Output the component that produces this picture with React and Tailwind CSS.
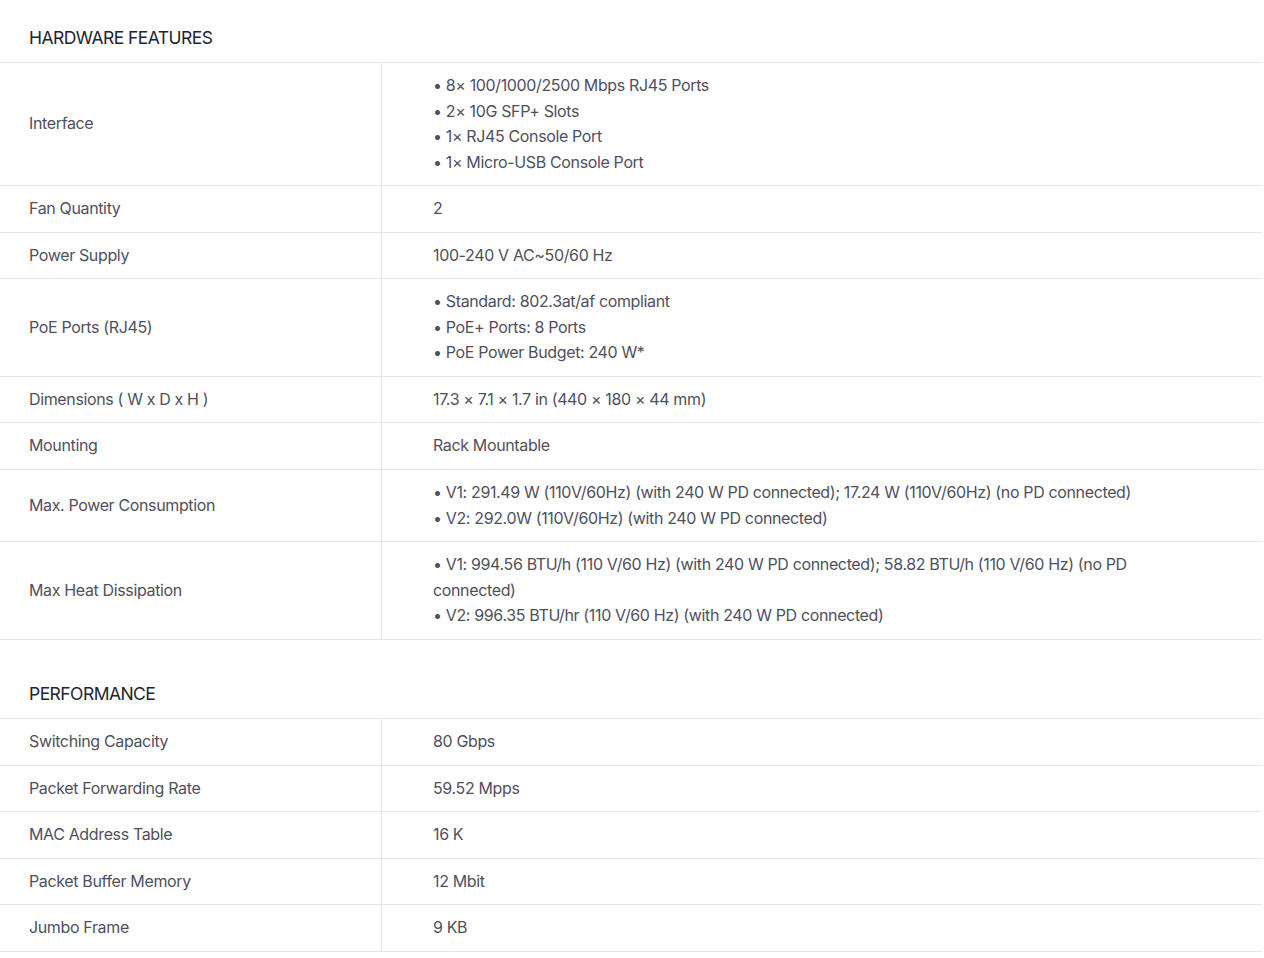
import React from "react";

const hardware = [
  ["Interface", ["• 8× 100/1000/2500 Mbps RJ45 Ports", "• 2× 10G SFP+ Slots", "• 1× RJ45 Console Port", "• 1× Micro-USB Console Port"]],
  ["Fan Quantity", ["2"]],
  ["Power Supply", ["100-240 V AC~50/60 Hz"]],
  ["PoE Ports (RJ45)", ["• Standard: 802.3at/af compliant", "• PoE+ Ports: 8 Ports", "• PoE Power Budget: 240 W*"]],
  ["Dimensions ( W x D x H )", ["17.3 × 7.1 × 1.7 in (440 × 180 × 44 mm)"]],
  ["Mounting", ["Rack Mountable"]],
  ["Max. Power Consumption", ["• V1: 291.49 W (110V/60Hz) (with 240 W PD connected); 17.24 W (110V/60Hz) (no PD connected)", "• V2: 292.0W (110V/60Hz) (with 240 W PD connected)"]],
  ["Max Heat Dissipation", ["• V1: 994.56 BTU/h (110 V/60 Hz) (with 240 W PD connected); 58.82 BTU/h (110 V/60 Hz) (no PD connected)", "• V2: 996.35 BTU/hr (110 V/60 Hz) (with 240 W PD connected)"]],
];

const performance = [
  ["Switching Capacity", ["80 Gbps"]],
  ["Packet Forwarding Rate", ["59.52 Mpps"]],
  ["MAC Address Table", ["16 K"]],
  ["Packet Buffer Memory", ["12 Mbit"]],
  ["Jumbo Frame", ["9 KB"]],
];

function Section({ title, rows }) {
  return (
    <div>
      <div className="pl-[29px] pt-[26px] pb-[12px] text-[17.5px] leading-[24px] text-[#23232f] tracking-[-0.55px]">
        {title}
      </div>
      <div className="border-t border-[#e6e6ec]">
        {rows.map(([label, vals]) => (
          <div key={label} className="flex border-b border-[#e6e6ec]">
            <div className="w-[382px] shrink-0 border-r border-[#e6e6ec] pl-[29px] py-[10px] flex items-center">
              {label}
            </div>
            <div className="flex-1 pl-[51px] pr-[50px] py-[10px]">
              {vals.map((v, i) => (
                <div key={i}>{v}</div>
              ))}
            </div>
          </div>
        ))}
      </div>
    </div>
  );
}

export default function App() {
  return (
    <div
      className="w-[1262px] bg-white text-[16px] leading-[25.55px] tracking-[-0.36px] text-[#50505c]"
      style={{ fontFamily: "Inter, 'Noto Sans', sans-serif" }}
    >
      <Section title="HARDWARE FEATURES" rows={hardware} />
      <div className="h-[16.5px]" />
      <Section title="PERFORMANCE" rows={performance} />
    </div>
  );
}
